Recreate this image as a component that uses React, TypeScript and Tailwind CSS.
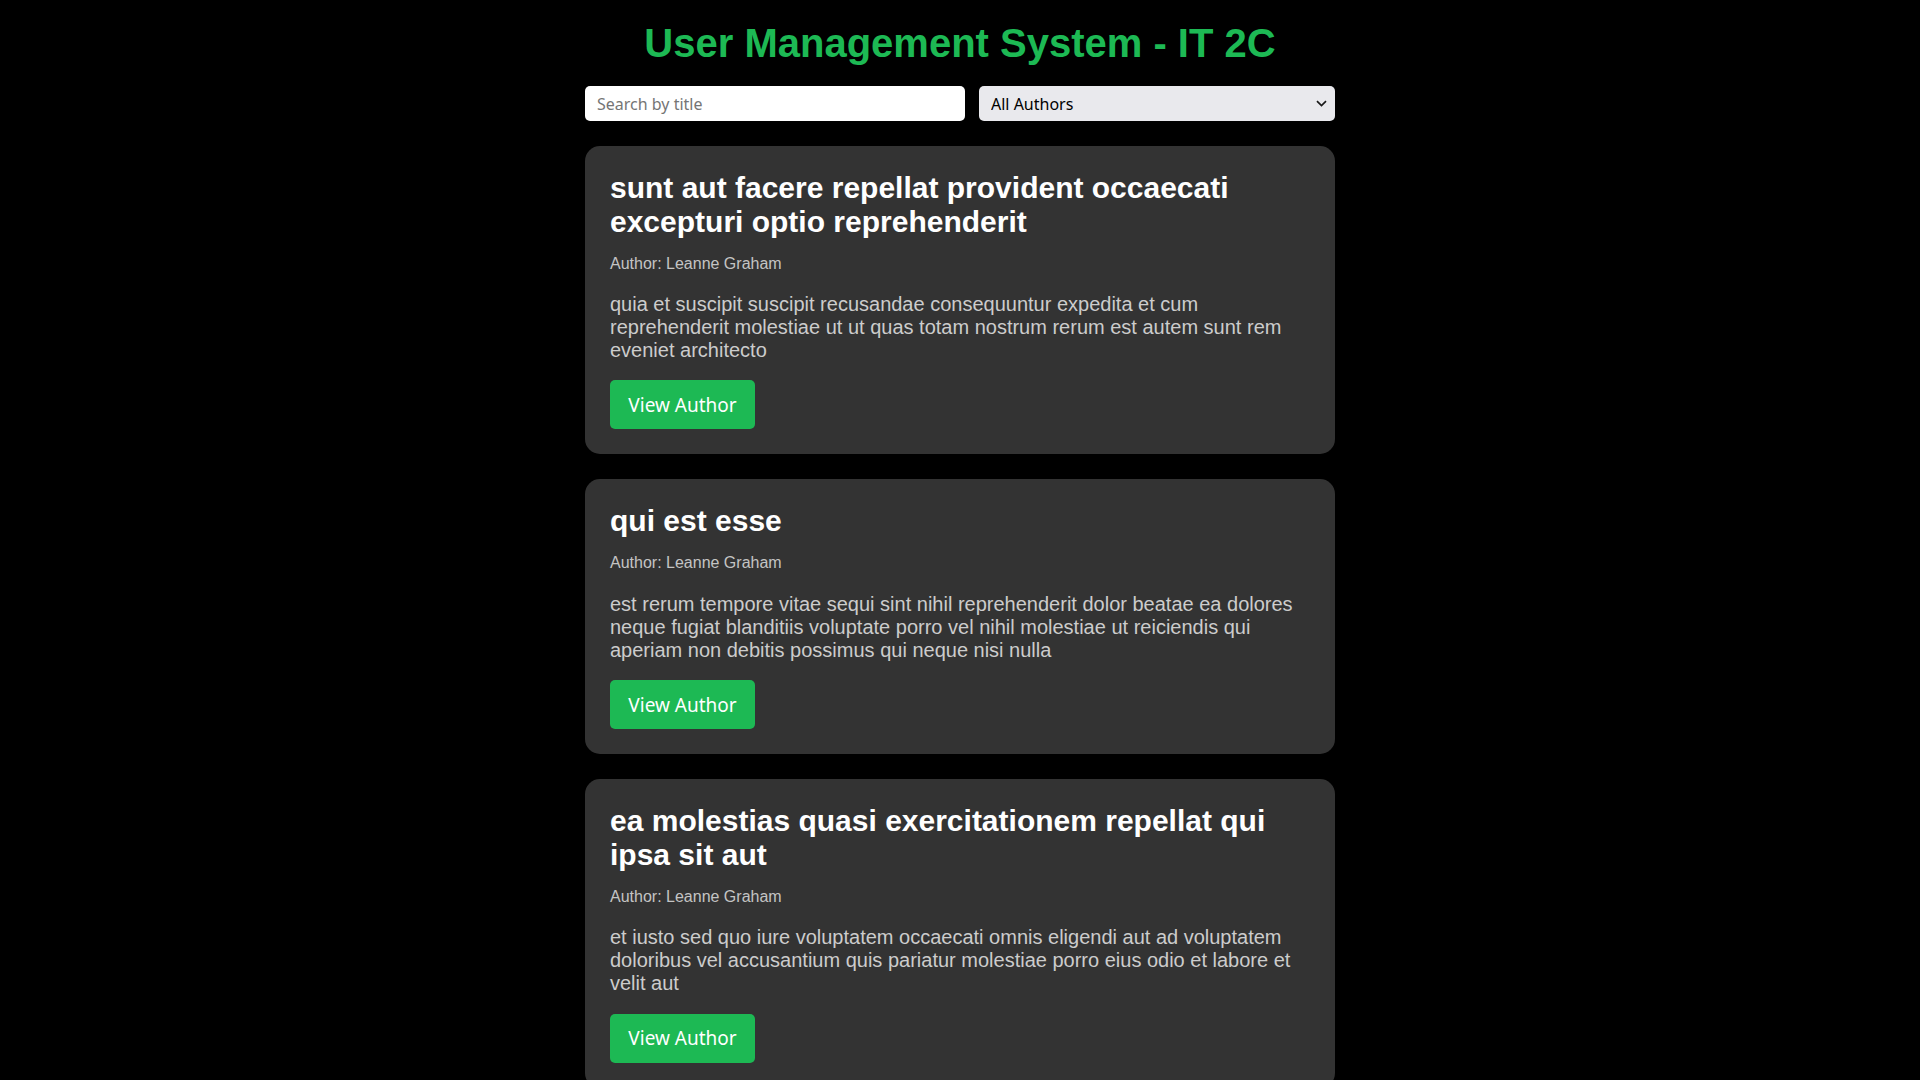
import React from "react";

const posts = [
  {
    title: "sunt aut facere repellat provident occaecati excepturi optio reprehenderit",
    body: "quia et suscipit suscipit recusandae consequuntur expedita et cum reprehenderit molestiae ut ut quas totam nostrum rerum est autem sunt rem eveniet architecto",
  },
  {
    title: "qui est esse",
    body: "est rerum tempore vitae sequi sint nihil reprehenderit dolor beatae ea dolores neque fugiat blanditiis voluptate porro vel nihil molestiae ut reiciendis qui aperiam non debitis possimus qui neque nisi nulla",
  },
  {
    title: "ea molestias quasi exercitationem repellat qui ipsa sit aut",
    body: "et iusto sed quo iure voluptatem occaecati omnis eligendi aut ad voluptatem doloribus vel accusantium quis pariatur molestiae porro eius odio et labore et velit aut",
  },
  {
    title: "eum et est occaecati",
    body: "ullam et saepe reiciendis voluptatem adipisci sit amet autem assumenda provident rerum culpa quis hic commodi nesciunt rem tenetur doloremque ipsam iure quis sunt voluptatem rerum illo velit",
  },
];

export default function App() {
  return (
    <div className="min-h-screen bg-black pt-[20px] pb-[40px] font-['Liberation_Sans',Arial,sans-serif]">
      <div className="mx-auto w-[750px]">
        <h1 className="m-0 text-center text-[40px] font-bold leading-[46px] text-[#1db954]">
          User Management System - IT 2C
        </h1>
        <div className="mt-[20px] flex gap-[14px]">
          <input
            type="text"
            placeholder="Search by title"
            className="h-[35px] w-[380px] rounded-[5px] border-0 bg-white px-[12px] font-['Noto_Sans',sans-serif] text-[16px] text-black outline-none placeholder:text-[#757575]"
          />
          <div className="relative h-[35px] w-[356px]">
            <select className="h-[35px] w-full appearance-none rounded-[5px] border-0 bg-[#e9e9ed] px-[12px] font-['Noto_Sans',sans-serif] text-[16px] text-black outline-none">
              <option>All Authors</option>
            </select>
            <svg
              className="pointer-events-none absolute right-[8px] top-[14px]"
              width="11"
              height="7"
              viewBox="0 0 11 7"
              fill="none"
            >
              <path d="M1 1.2 L5.5 5.5 L10 1.2" stroke="#1a1a1a" strokeWidth="1.7" />
            </svg>
          </div>
        </div>
        <div className="mt-[25px] flex flex-col gap-[25px]">
          {posts.map((p, i) => (
            <div key={i} className="rounded-[15px] bg-[#333333] p-[25px]">
              <h2 className="m-0 text-[30px] font-bold leading-[33.5px] text-white">{p.title}</h2>
              <p className="m-0 mt-[16.5px] text-[16px] leading-[18.4px] text-[#c4c4c4]">
                Author: Leanne Graham
              </p>
              <p className="m-0 mt-[20px] text-[20px] leading-[23px] text-[#cccccc]">{p.body}</p>
              <button className="mt-[18.5px] flex h-[49px] w-[145px] items-center justify-center rounded-[5px] bg-[#1db954] font-['Noto_Sans',sans-serif] text-[19px] text-white">
                View Author
              </button>
            </div>
          ))}
        </div>
      </div>
    </div>
  );
}
